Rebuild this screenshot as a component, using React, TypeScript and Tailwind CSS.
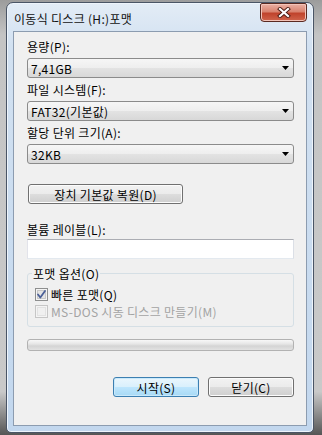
import React from 'react';

const font = { fontFamily: '"Noto Sans CJK KR", "Noto Sans", sans-serif', letterSpacing: '0.3px' };

const Combo = ({ value }: { value: string }) => (
  <div className="flex items-center justify-between h-[20px] w-[267px] rounded-[3px] border border-[#8b8b8b] bg-[linear-gradient(to_bottom,#f6f6f6_0%,#eeeeee_50%,#e3e3e3_50%,#d8d8d8_100%)] pl-[3px] pr-[4px] text-[12px] leading-[15px] text-black">
    <span className="pt-[1px]">{value}</span>
    <svg width="7" height="4" viewBox="0 0 7 4">
      <polygon points="0,0 7,0 3.5,4" fill="#000" />
    </svg>
  </div>
);

const Label = ({ text, className = '' }: { text: string; className?: string }) => (
  <div className={`text-[12px] leading-[15px] text-black ${className}`}>{text}</div>
);

const Button = ({ text, primary = false, className = '' }: { text: string; primary?: boolean; className?: string }) => (
  <div
    className={`flex items-center justify-center rounded-[3px] border text-[12px] leading-[15px] text-black ${
      primary
        ? 'border-[#3c7fb1] bg-[linear-gradient(to_bottom,#eaf6fd_0%,#d9f0fc_50%,#bee6fd_50%,#a7d9f5_100%)] shadow-[inset_0_0_0_1px_#c9e9fb]'
        : 'border-[#707070] bg-[linear-gradient(to_bottom,#f2f2f2_0%,#ebebeb_50%,#dddddd_50%,#cfcfcf_100%)] shadow-[inset_0_0_0_1px_#fcfcfc]'
    } ${className}`}
  >
    {text}
  </div>
);

const CheckBox = ({ checked, disabled = false }: { checked?: boolean; disabled?: boolean }) => (
  <svg width="13" height="13" viewBox="0 0 13 13" className="shrink-0">
    <rect x="0.5" y="0.5" width="12" height="12" fill="#f4f4f4" stroke={disabled ? '#c6c6c6' : '#8e8f8f'} />
    <rect x="2.5" y="2.5" width="8" height="8" fill={disabled ? '#f0f0f0' : '#e4e4e4'} stroke={disabled ? '#e2e2e2' : '#c8c8c8'} />
    {checked && (
      <path d="M3 6.5 L5.3 9.5 L10 3" fill="none" stroke="#4a5f97" strokeWidth="1.8" strokeLinecap="round" strokeLinejoin="round" />
    )}
  </svg>
);

export default function App() {
  return (
    <div className="w-[322px] h-[435px] overflow-hidden bg-[linear-gradient(to_bottom,#9c9c9c_0%,#c4c4c4_8%,#c9c9c9_90%,#555555_100%)] pl-[6px] pt-[2px]" style={font}>
      <div className="flex flex-col w-[308px] h-[431px] rounded-t-[7px] rounded-b-[5px] border border-[#4a5566] bg-[linear-gradient(to_bottom,#e3ecf6_0%,#d2e1f1_10%,#c2d7ee_100%)] shadow-[inset_0_0_0_1px_#eef4fb]">
        <div className="flex items-start justify-between h-[28px] pl-[7px] pr-[6px]">
          <div className="pt-[8px] text-[12px] leading-[15px] text-[#111]">이동식 디스크 (H:)포맷</div>
          <div className="flex items-center justify-center w-[47px] h-[19px] rounded-b-[4px] rounded-t-[2px] border border-[#5a2a22] bg-[linear-gradient(to_bottom,#eab0a4_0%,#d9836f_45%,#c0432c_55%,#d0654c_100%)] shadow-[inset_0_0_0_1px_#f2c3b8]">
            <svg width="14" height="11" viewBox="0 0 14 11">
              <path d="M3 2 L11 9 M11 2 L3 9" stroke="#4b1a12" strokeWidth="4" strokeLinecap="square" />
              <path d="M3 2 L11 9 M11 2 L3 9" stroke="#ffffff" strokeWidth="2.2" strokeLinecap="square" />
            </svg>
          </div>
        </div>
        <div className="flex-1 mx-[6px] mb-[6px] border border-[#8c9cb0] bg-[#f0f0f0] pt-[7px] px-[13px]">
          <Label text="용량(P):" />
          <div className="mt-[4px]"><Combo value="7,41GB" /></div>
          <Label text="파일 시스템(F):" className="mt-[4px]" />
          <div className="mt-[4px]"><Combo value="FAT32(기본값)" /></div>
          <Label text="할당 단위 크기(A):" className="mt-[4px]" />
          <div className="mt-[4px]"><Combo value="32KB" /></div>
          <Button text="장치 기본값 복원(D)" className="mt-[20px] ml-[1px] w-[155px] h-[20px]" />
          <Label text="볼륨 레이블(L):" className="mt-[18px]" />
          <div className="mt-[2px] h-[20px] w-[267px] border border-[#abadb3] border-l-[#e2e3ea] border-r-[#dbdfe6] border-b-[#e3e9ef] bg-white" />
          <fieldset className="mt-[7px] w-[267px] rounded-[3px] border border-[#d5dfe5] px-[7px] pt-[5px] pb-[6px]">
            <legend className="ml-[-3px] px-[1px] text-[12px] leading-[15px] text-black">포맷 옵션(O)</legend>
            <div className="flex items-center gap-[3px] h-[17px] text-[12px] leading-[15px] text-black">
              <CheckBox checked />
              <span>빠른 포맷(Q)</span>
            </div>
            <div className="flex items-center gap-[3px] h-[17px] text-[12px] leading-[15px] text-[#a3a3a3]">
              <CheckBox disabled />
              <span>MS-DOS 시동 디스크 만들기(M)</span>
            </div>
          </fieldset>
          <div className="mt-[12px] h-[12px] w-[267px] rounded-[3px] border border-[#b2b2b2] bg-[linear-gradient(to_bottom,#f8f8f8_0%,#e6e6e6_40%,#d4d4d4_60%,#e2e2e2_100%)]" />
          <div className="mt-[26px] flex justify-end gap-[9px] w-[267px]">
            <Button text="시작(S)" primary className="w-[86px] h-[20px]" />
            <Button text="닫기(C)" className="w-[86px] h-[20px]" />
          </div>
        </div>
      </div>
    </div>
  );
}
